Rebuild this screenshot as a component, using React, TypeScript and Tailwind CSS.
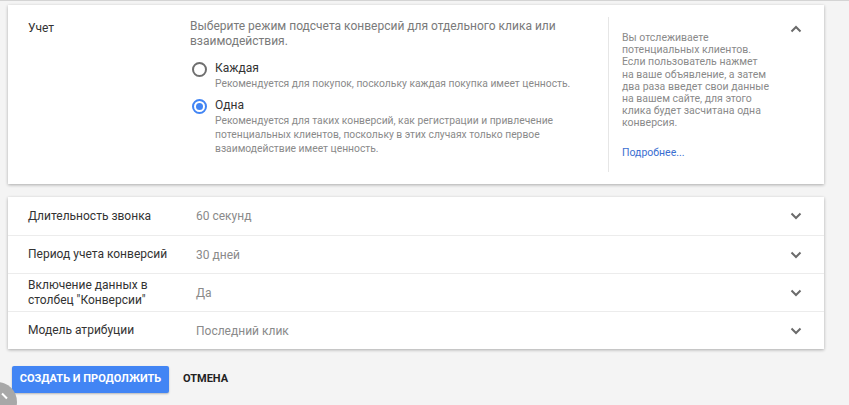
import React from "react";

const font = { fontFamily: "Roboto, 'Noto Sans', Arial, sans-serif" };

function Chevron({ up = false }: { up?: boolean }) {
  return (
    <svg width="12" height="8" viewBox="0 0 12 8" className="text-[#6b6b6b]">
      <path
        d={up ? "M1.5 6.5 L6 2 L10.5 6.5" : "M1.5 1.5 L6 6 L10.5 1.5"}
        fill="none"
        stroke="currentColor"
        strokeWidth="2"
      />
    </svg>
  );
}

function Radio({ checked }: { checked?: boolean }) {
  return (
    <span
      className={`mt-[1px] flex h-[15px] w-[15px] shrink-0 items-center justify-center rounded-full border-2 ${
        checked ? "border-[#4285f4]" : "border-[#6f6f6f]"
      }`}
    >
      {checked && <span className="h-[7px] w-[7px] rounded-full bg-[#4285f4]" />}
    </span>
  );
}

const rows = [
  { label: "Длительность звонка", value: "60 секунд" },
  { label: "Период учета конверсий", value: "30 дней" },
  { label: 'Включение данных в столбец "Конверсии"', value: "Да" },
  { label: "Модель атрибуции", value: "Последний клик" },
];

const helpLines = [
  "Вы отслеживаете",
  "потенциальных клиентов.",
  "Если пользователь нажмет",
  "на ваше объявление, а затем",
  "два раза введет свои данные",
  "на вашем сайте, для этого",
  "клика будет засчитана одна",
  "конверсия.",
];

export default function App() {
  return (
    <div
      style={font}
      className="relative h-[405px] w-[849px] overflow-hidden border-t border-[#d4d4d4] bg-[#f4f4f4] pt-[4px]"
    >
      {/* Учет card */}
      <div className="ml-[8px] flex h-[179px] w-[816px] bg-white shadow-[0_1px_3px_rgba(0,0,0,0.3)]">
        <div className="w-[182px] shrink-0 pl-[20px] pt-[14px] text-[12px] text-[#333]">
          Учет
        </div>
        <div className="w-[418px] shrink-0 pt-[14px]">
          <p className="text-[12px] leading-[15px] text-[#7a7a7a]">
            Выберите режим подсчета конверсий для отдельного клика или
            взаимодействия.
          </p>
          <div className="mt-[12px] flex gap-[8px] pl-[2px]">
            <Radio />
            <div>
              <div className="text-[12px] leading-[15px] text-[#333]">Каждая</div>
              <div className="mt-[1px] text-[10.3px] leading-[13px] text-[#8a8a8a]">
                Рекомендуется для покупок, поскольку каждая покупка имеет ценность.
              </div>
            </div>
          </div>
          <div className="mt-[8px] flex gap-[8px] pl-[2px]">
            <Radio checked />
            <div>
              <div className="text-[12px] leading-[15px] text-[#333]">Одна</div>
              <div className="mt-[1px] w-[360px] text-[10.3px] leading-[14px] text-[#8a8a8a]">
                Рекомендуется для таких конверсий, как регистрации и привлечение
                потенциальных клиентов, поскольку в этих случаях только первое
                взаимодействие имеет ценность.
              </div>
            </div>
          </div>
        </div>
        <div className="my-[12px] w-[170px] shrink-0 border-l border-[#e6e6e6] pl-[13px] pt-[15px]">
          <p className="whitespace-nowrap text-[10.5px] leading-[12.2px] text-[#8a8a8a]">
            {helpLines.map((l) => (
              <span key={l} className="block">
                {l}
              </span>
            ))}
          </p>
          <a className="mt-[15px] block text-[10.5px] text-[#3b6fd1]">Подробнее...</a>
        </div>
        <div className="flex flex-1 justify-end pr-[22px] pt-[20px]">
          <Chevron up />
        </div>
      </div>

      {/* Settings rows */}
      <div className="ml-[8px] mt-[13px] w-[816px] bg-white shadow-[0_1px_3px_rgba(0,0,0,0.3)]">
        {rows.map((r, i) => (
          <div
            key={r.label}
            className={`flex h-[38px] items-center pl-[20px] pr-[22px] ${
              i > 0 ? "border-t border-[#ececec]" : ""
            }`}
          >
            <div className="w-[168px] text-[12px] leading-[15px] text-[#333]">
              {r.label}
            </div>
            <div className="flex-1 text-[12px] text-[#8a8a8a]">{r.value}</div>
            <Chevron />
          </div>
        ))}
      </div>

      {/* Actions */}
      <div className="ml-[12px] mt-[17px] flex items-center gap-[14px]">
        <button className="h-[27px] w-[157px] rounded-[2px] bg-[#4285f4] text-[11px] font-bold text-white shadow-[0_1px_2px_rgba(0,0,0,0.25)]">
          СОЗДАТЬ И ПРОДОЛЖИТЬ
        </button>
        <button className="text-[11px] font-bold text-[#222]">ОТМЕНА</button>
      </div>

      {/* corner fab */}
      <div className="absolute left-[-23px] top-[381px] flex h-[40px] w-[40px] items-start justify-end rounded-full bg-[#a8a8a8]">
        <span className="mr-[9px] mt-[13px] block h-[2px] w-[7px] rotate-45 bg-white" />
      </div>
    </div>
  );
}
